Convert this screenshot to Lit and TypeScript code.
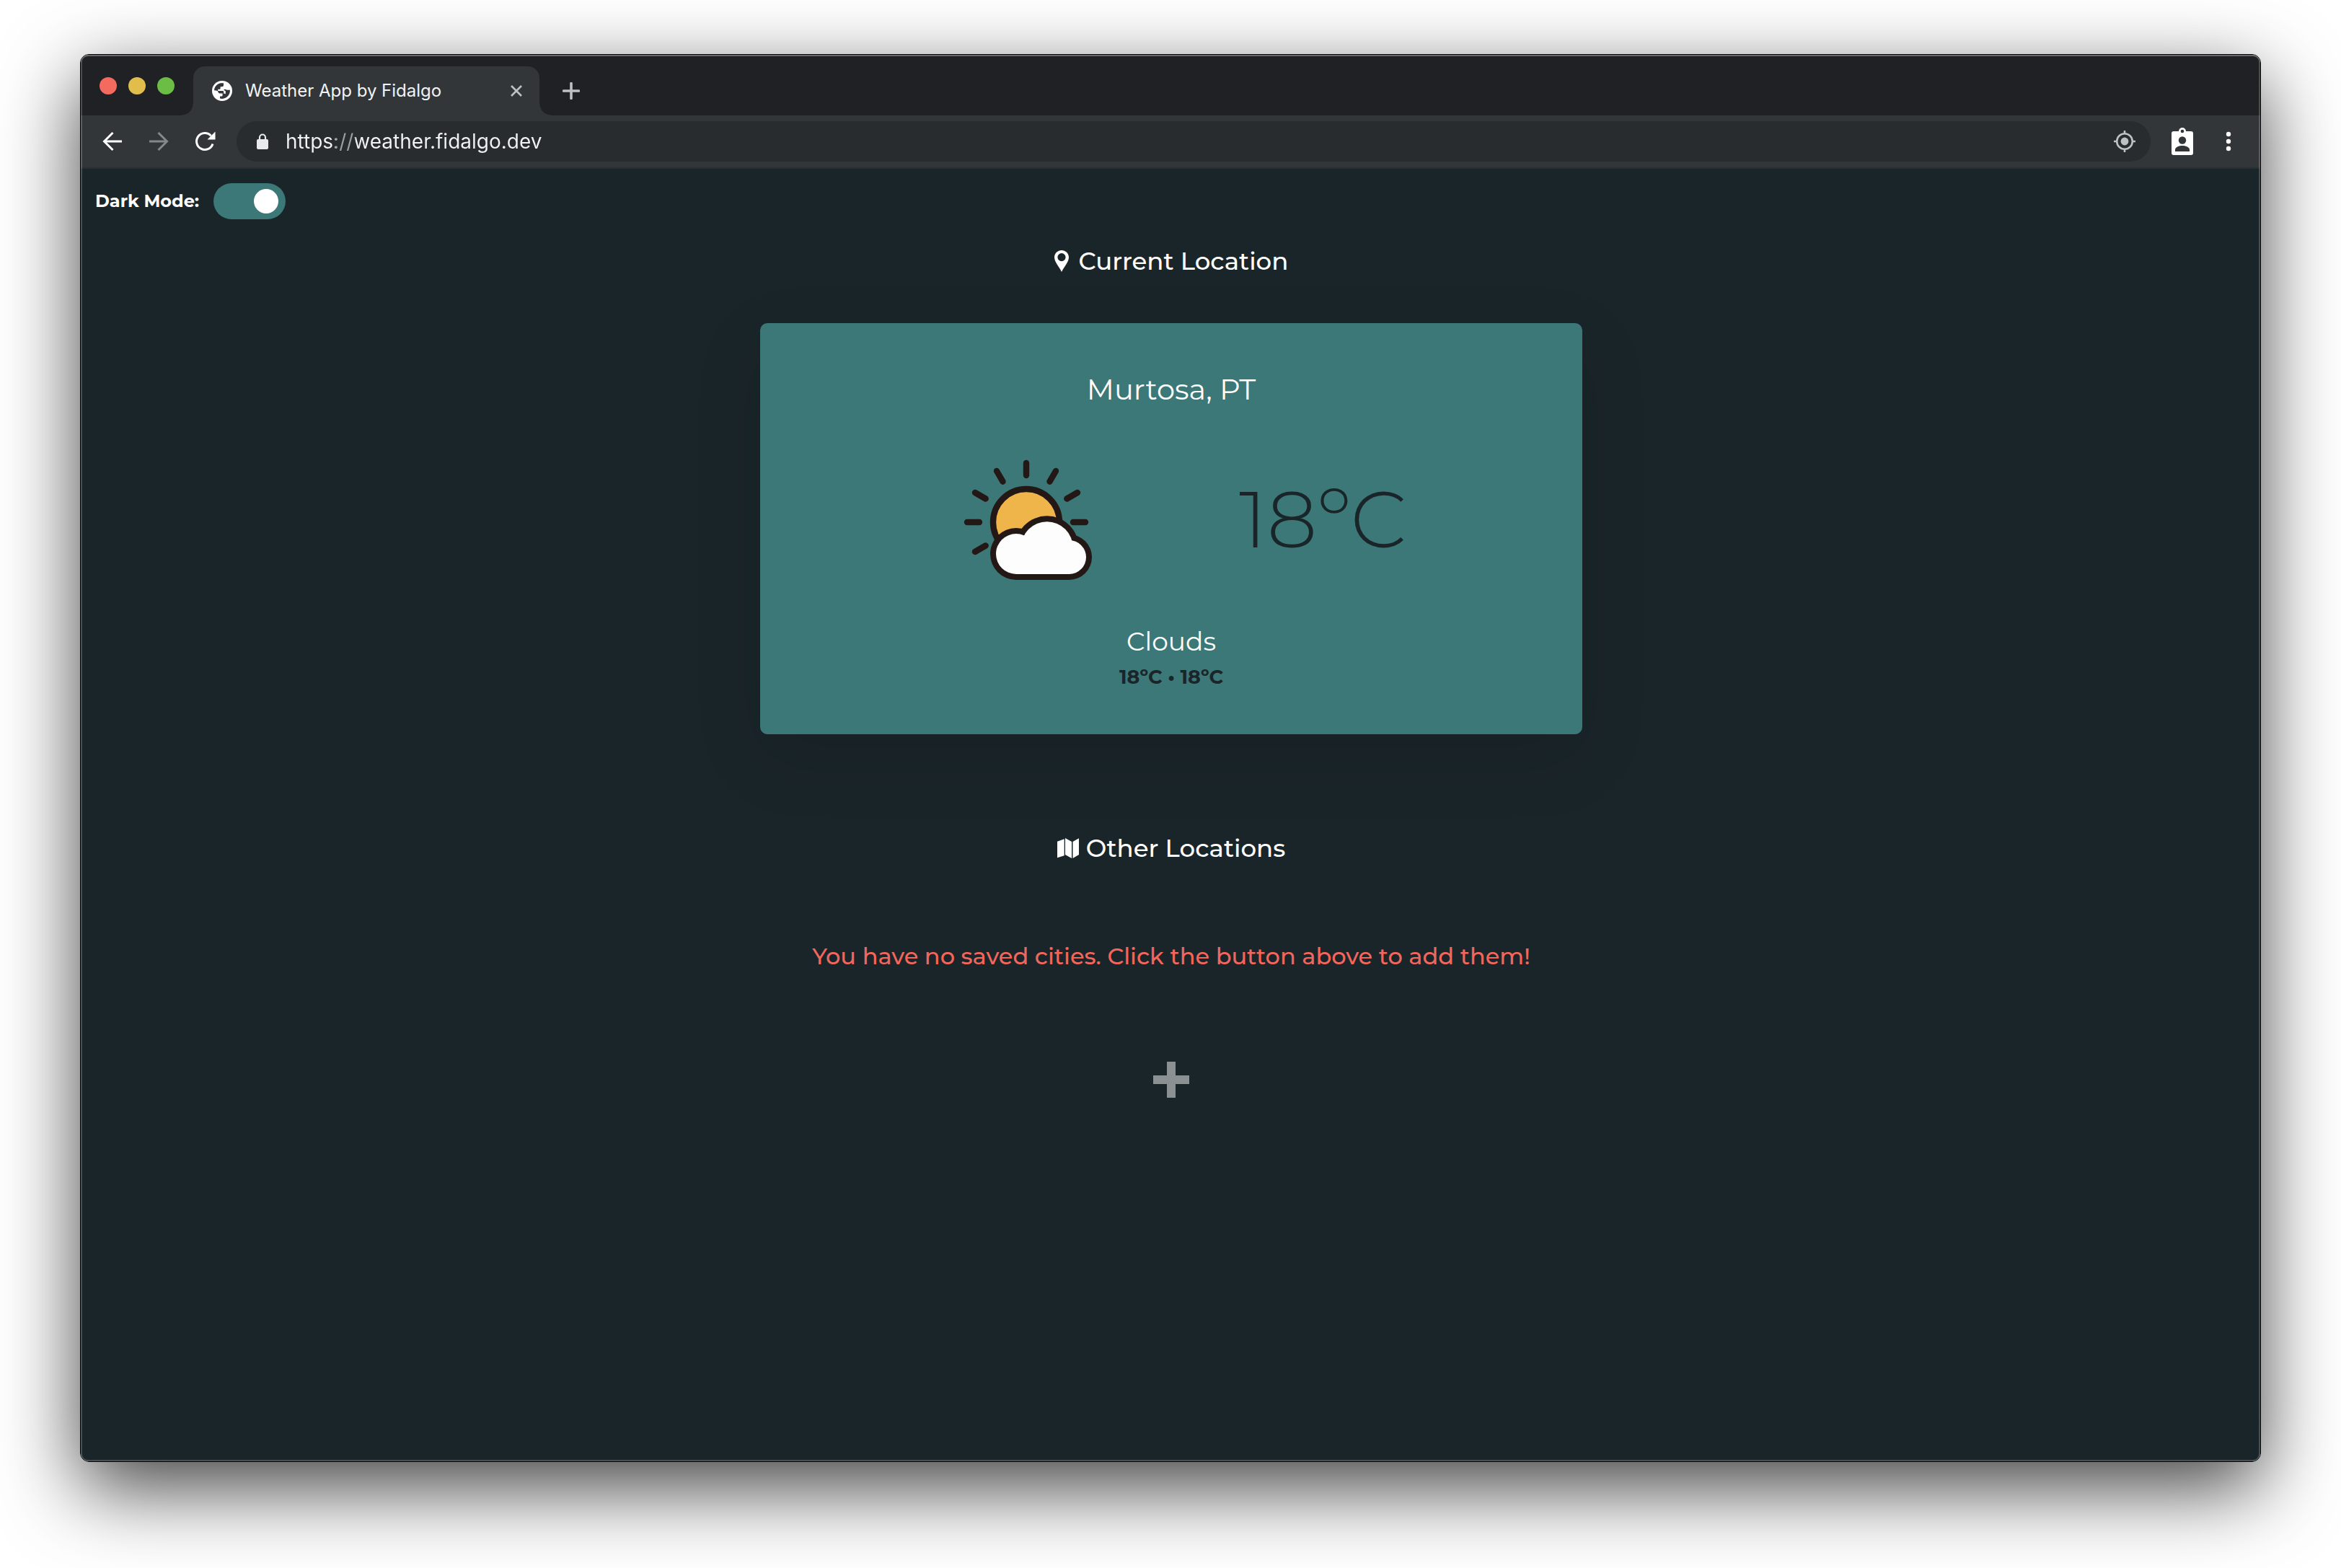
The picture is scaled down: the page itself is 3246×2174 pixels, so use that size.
import { LitElement, html, css, svg } from "lit";
import { customElement, state } from "lit/decorators.js";

const RAY_ANGLES = [0, 30, 60, 90, 120, 150, 180, 330];

const globeIcon = html`<svg class="globe" viewBox="0 0 28 28" aria-hidden="true">
  <circle cx="14" cy="14" r="14" fill="#fff" />
  <path
    fill="#323639"
    d="M3 13.2C3.3 8.3 7 4.200 11.800 3.300H16V6.200C16 7.400 15 8.200 13.800 8.200H11.600V10.400C11.600 11.200 11 11.700 10.200 11.700H8.200V14H14.600C15.600 14 16.200 14.600 16.200 15.500V17.800H17.400C18.600 17.800 18.800 18.500 18.800 19.300V14.500C18.600 13.800 17.600 13.400 16.600 13.200V11.800L19 11.900C20 12 20.600 12.800 21.600 12.800H24.900C25.400 18.800 20.800 24.800 14 24.900C12.800 24.900 11.800 24.700 11 24.500V21.500H13.200C14.200 21.500 14.600 20.800 14.600 20V17.600H11.400C9.600 17.600 8.600 16.600 8.400 15.200C8.200 14 6.800 13.600 5.600 13.400Z"
  />
</svg>`;

const closeIcon = html`<svg class="close-icon" viewBox="0 0 20 20" aria-hidden="true">
  <path d="M3 3L17 17M17 3L3 17" stroke="#bdc1c6" stroke-width="2.6" fill="none" />
</svg>`;

const newTabIcon = html`<svg class="new-icon" viewBox="0 0 24 24" aria-hidden="true">
  <path d="M12 1.500V22.500M1.500 12H22.500" stroke="#bdc1c6" stroke-width="3.600" stroke-linecap="round" />
</svg>`;

const backIcon = html`<svg class="nav-icon" viewBox="0 0 32 32" aria-hidden="true">
  <path d="M29 16H5M16.500 4L4.500 16L16.500 28" stroke="#fff" stroke-width="3" fill="none" />
</svg>`;

const forwardIcon = html`<svg class="nav-icon" viewBox="0 0 32 32" aria-hidden="true">
  <path d="M3 16H27M15.500 4L27.500 16L15.500 28" stroke="#85888a" stroke-width="3" fill="none" />
</svg>`;

const reloadIcon = html`<svg class="nav-icon" viewBox="0 0 32 32" aria-hidden="true">
  <path d="M27 19.500A11.500 11.500 0 1 1 24.500 8.200" stroke="#fff" stroke-width="3" fill="none" />
  <path d="M30.500 2.500V13.500H19.500Z" fill="#fff" />
</svg>`;

const lockIcon = html`<svg class="lock" viewBox="0 0 20 24" aria-hidden="true">
  <rect x="2" y="9" width="16" height="14" rx="2" fill="#e8eaed" />
  <path d="M6 10V6.500a4 4 0 0 1 8 0V10" stroke="#e8eaed" stroke-width="2.200" fill="none" />
</svg>`;

const targetIcon = html`<svg class="target" viewBox="0 0 30 30" aria-hidden="true">
  <circle cx="15" cy="15" r="5.400" fill="#bdc1c6" />
  <circle cx="15" cy="15" r="10.800" fill="none" stroke="#bdc1c6" stroke-width="2.600" />
  <path d="M15 0V4M15 26V30M0 15H4M26 15H30" stroke="#bdc1c6" stroke-width="2.600" />
</svg>`;

const badgeIcon = html`<svg class="badge" viewBox="0 0 30 38" aria-hidden="true">
  <rect y="5" width="30" height="33" rx="3" fill="#fff" />
  <circle cx="15" cy="5" r="5" fill="#fff" />
  <circle cx="15" cy="5" r="2.300" fill="#323639" />
  <circle cx="15" cy="17.500" r="5.200" fill="#323639" />
  <path d="M5 33V30.500C5 26.800 11 25 15 25S25 26.800 25 30.500V33Z" fill="#323639" />
</svg>`;

const menuIcon = html`<svg class="dots" viewBox="0 0 12 32" aria-hidden="true">
  <circle cx="6" cy="6" r="3.200" fill="#fff" />
  <circle cx="6" cy="16" r="3.200" fill="#fff" />
  <circle cx="6" cy="26" r="3.200" fill="#fff" />
</svg>`;

const pinIcon = html`<svg class="pin" viewBox="0 0 24 30" aria-hidden="true">
  <path
    fill="#fff"
    fill-rule="evenodd"
    d="M10 0C4.500 0 0 4.300 0 9.800C0 16 6 22 10 30C14 22 20 16 20 9.800C20 4.300 15.500 0 10 0ZM10 4A5.600 5.600 0 1 1 10 15.200A5.600 5.600 0 1 1 10 4Z"
  />
</svg>`;

const mapIcon = html`<svg class="map" viewBox="0 0 30 28" aria-hidden="true">
  <path
    fill="#fff"
    d="M0 4.700L9.700 1.300V24.300L0 27.300ZM11 0L20 5V28L11 23ZM21.500 5L30 .300V23L21.500 28Z"
  />
</svg>`;

const plusIcon = html`<svg class="plus" viewBox="0 0 50 50" aria-hidden="true">
  <path d="M19 0H31V19H50V31H31V50H19V31H0V19H19Z" fill="#8b9092" />
</svg>`;

const partlyCloudy = html`<svg class="weather-icon" viewBox="0 -4 186 178" role="img" aria-label="Clouds">
  ${RAY_ANGLES.map((angle) => {
    const x = -Math.cos((angle * Math.PI) / 180);
    const y = -Math.sin((angle * Math.PI) / 180);
    return svg`<line
      x1=${90 + x * 65} y1=${89 + y * 65} x2=${90 + x * 82} y2=${89 + y * 82}
      stroke="#231815" stroke-width="8.400" stroke-linecap="round" />`;
  })}
  <circle cx="90" cy="89" r="46" fill="#f0b54a" stroke="#231815" stroke-width="8.400" />
  <g fill="#231815">
    <circle cx="76" cy="133" r="36" />
    <circle cx="118.700" cy="124.300" r="44" />
    <circle cx="149.500" cy="137.500" r="31.500" />
    <rect x="76" y="125" width="73.500" height="44" />
  </g>
  <g fill="#fdfdfd">
    <circle cx="76" cy="133" r="28" />
    <circle cx="118.700" cy="124.300" r="36" />
    <circle cx="149.500" cy="137.500" r="23.500" />
    <rect x="76" y="125" width="73.500" height="36" />
  </g>
</svg>`;

@customElement("browser-chrome")
export class BrowserChrome extends LitElement {
  static styles = css`
    :host {
      display: block;
      font-family: Inter, Roboto, sans-serif;
    }
    button {
      display: flex;
      padding: 0;
      border: 0;
      background: none;
      cursor: pointer;
    }
    svg {
      display: block;
      flex: none;
    }
    .strip {
      display: flex;
      align-items: flex-end;
      height: 84px;
      padding-left: 26px;
      background: #202124;
    }
    .lights {
      display: flex;
      gap: 16px;
      margin: 0 26px 29px 0;
    }
    .light {
      width: 24px;
      height: 24px;
      border-radius: 50%;
    }
    .red {
      background: #f46a5e;
    }
    .yellow {
      background: #e1be4c;
    }
    .green {
      background: #6bbd45;
    }
    .tab {
      position: relative;
      display: flex;
      align-items: center;
      gap: 18px;
      box-sizing: border-box;
      width: 480px;
      height: 68px;
      padding: 0 22px 0 26px;
      border-radius: 16px 16px 0 0;
      background: #323639;
    }
    .tab::before,
    .tab::after {
      content: "";
      position: absolute;
      bottom: 0;
      width: 16px;
      height: 16px;
    }
    .tab::before {
      right: 100%;
      background: radial-gradient(circle at 0 0, transparent 15px, #323639 16px);
    }
    .tab::after {
      left: 100%;
      background: radial-gradient(circle at 100% 0, transparent 15px, #323639 16px);
    }
    .title {
      flex: 1;
      font-size: 24px;
      line-height: 32px;
      color: #f1f3f4;
      white-space: nowrap;
    }
    .new-tab {
      align-self: center;
      margin: 16px 0 0 32px;
    }
    .toolbar {
      display: flex;
      align-items: center;
      height: 72px;
      padding: 0 38px 0 28px;
      border-bottom: 2px solid #2b2f31;
      background: #323639;
    }
    .nav {
      display: flex;
      gap: 32px;
      margin-right: 28px;
    }
    .omnibox {
      display: flex;
      flex: 1;
      align-items: center;
      gap: 22px;
      height: 56px;
      margin-right: 29px;
      padding: 0 21px 0 26px;
      border-radius: 28px;
      background: #282c2f;
    }
    .url {
      flex: 1;
      min-width: 0;
      height: 40px;
      padding: 0;
      border: 0;
      outline: 0;
      font: 28px/40px Inter, Roboto, sans-serif;
      color: #f1f3f4;
      background: linear-gradient(90deg, #f1f3f4 69px, #9aa0a6 69px, #9aa0a6 97px, #f1f3f4 97px);
      -webkit-background-clip: text;
      background-clip: text;
      -webkit-text-fill-color: transparent;
    }
    .globe {
      width: 28px;
      height: 28px;
    }
    .close-icon {
      width: 20px;
      height: 20px;
    }
    .new-icon {
      width: 24px;
      height: 24px;
    }
    .nav-icon {
      width: 32px;
      height: 32px;
    }
    .lock {
      width: 20px;
      height: 24px;
    }
    .target {
      width: 30px;
      height: 30px;
    }
    .badge {
      width: 30px;
      height: 38px;
    }
    .dots {
      width: 12px;
      height: 32px;
    }
    .profile {
      margin-right: 43px;
    }
  `;

  render() {
    return html`
      <div class="strip">
        <div class="lights">
          <button class="light red" aria-label="Close window"></button>
          <button class="light yellow" aria-label="Minimise window"></button>
          <button class="light green" aria-label="Zoom window"></button>
        </div>
        <div class="tab">
          ${globeIcon}
          <span class="title">Weather App by Fidalgo</span>
          <button aria-label="Close tab">${closeIcon}</button>
        </div>
        <button class="new-tab" aria-label="New tab">${newTabIcon}</button>
      </div>
      <div class="toolbar">
        <div class="nav">
          <button aria-label="Back">${backIcon}</button>
          <button aria-label="Forward">${forwardIcon}</button>
          <button aria-label="Reload">${reloadIcon}</button>
        </div>
        <div class="omnibox">
          ${lockIcon}
          <input class="url" type="text" aria-label="Address" .value=${"https://weather.fidalgo.dev"} spellcheck="false" />
          <button aria-label="Location access">${targetIcon}</button>
        </div>
        <button class="profile" aria-label="Profile">${badgeIcon}</button>
        <button aria-label="Menu">${menuIcon}</button>
      </div>
    `;
  }
}

@customElement("weather-card")
export class WeatherCard extends LitElement {
  static styles = css`
    :host {
      display: block;
      box-sizing: border-box;
      width: 100%;
      max-width: 1140px;
      padding: 68px 32px 63px;
      border-radius: 10px;
      background: #3b7877;
      box-shadow: 0 32px 96px rgba(0, 0, 0, 0.12);
      text-align: center;
    }
    .city {
      margin: 0;
      font-size: 40px;
      font-weight: 400;
      line-height: 48px;
      color: #fff;
    }
    .now {
      display: grid;
      grid-template-columns: repeat(2, minmax(0, 408px));
      align-items: center;
      justify-content: center;
      justify-items: center;
      margin: 67px 0 58px;
      padding-left: 12px;
    }
    .weather-icon {
      display: block;
      width: 186px;
      height: 178px;
    }
    .temperature {
      font-size: 110px;
      font-weight: 300;
      line-height: 112px;
      color: #1a252a;
    }
    .condition {
      margin: 0;
      font-size: 36px;
      line-height: 44px;
      color: #fff;
    }
    .range {
      margin: 12px 0 0;
      font-size: 27px;
      font-weight: 700;
      line-height: 32px;
      color: #1a252a;
    }
  `;

  render() {
    return html`
      <h3 class="city">Murtosa, PT</h3>
      <div class="now">
        ${partlyCloudy}
        <span class="temperature">18ºC</span>
      </div>
      <p class="condition">Clouds</p>
      <p class="range">18ºC • 18ºC</p>
    `;
  }
}

@customElement("app-root")
export class AppRoot extends LitElement {
  static styles = css`
    :host {
      display: flex;
      box-sizing: border-box;
      min-height: 100vh;
      padding: 75px 111px 147px;
      background: #fff;
      font-family: Montserrat, Inter, sans-serif;
    }
    .window {
      position: relative;
      display: flex;
      flex: 1;
      flex-direction: column;
      border: 1px solid #000;
      border-radius: 12px;
      box-shadow: 0 36px 110px rgba(0, 0, 0, 0.74);
    }
    .window::after {
      content: "";
      position: absolute;
      inset: 0;
      border-radius: 10px;
      box-shadow:
        inset 0 0 0 2px rgba(255, 255, 255, 0.2),
        inset 0 2px 0 rgba(255, 255, 255, 0.16);
      pointer-events: none;
    }
    .chrome {
      overflow: hidden;
      border-radius: 10px 10px 0 0;
    }
    .page {
      flex: 1;
      padding: 20px 18px 20px 20px;
      border-radius: 0 0 10px 10px;
      background: #1a252a;
    }
    .mode {
      display: flex;
      align-items: center;
      gap: 20px;
      width: max-content;
      font-size: 24px;
      font-weight: 700;
      line-height: 32px;
      color: #fff;
    }
    .switch {
      display: flex;
      align-items: center;
      appearance: none;
      box-sizing: border-box;
      width: 100px;
      height: 50px;
      margin: 0;
      padding: 0 10px;
      border-radius: 25px;
      background: #5c6468;
      cursor: pointer;
    }
    .switch::before {
      content: "";
      width: 34px;
      height: 34px;
      border-radius: 50%;
      background: #fff;
    }
    .switch:checked {
      justify-content: flex-end;
      background: #3b7877;
    }
    .content {
      display: flex;
      flex-direction: column;
      align-items: center;
      margin-top: 38px;
    }
    .heading {
      display: flex;
      align-items: center;
      gap: 10px;
      margin: 0;
      font-size: 34px;
      font-weight: 500;
      line-height: 40px;
      color: #fff;
    }
    .card {
      margin: 66px 0 138px;
    }
    .empty {
      margin: 110px 0 126px;
      font-size: 32px;
      font-weight: 500;
      line-height: 40px;
      color: #f2665c;
    }
    .add {
      display: flex;
      padding: 0;
      border: 0;
      background: none;
      cursor: pointer;
    }
    .pin {
      width: 24px;
      height: 30px;
    }
    .map {
      width: 30px;
      height: 28px;
    }
    .plus {
      width: 50px;
      height: 50px;
    }
  `;

  @state() private dark = true;

  private toggle(e: Event) {
    this.dark = (e.target as HTMLInputElement).checked;
  }

  render() {
    return html`
      <div class="window">
        <browser-chrome class="chrome"></browser-chrome>
        <main class="page">
          <label class="mode">
            Dark Mode:
            <input class="switch" type="checkbox" role="switch" .checked=${this.dark} @change=${this.toggle} />
          </label>
          <div class="content">
            <h2 class="heading">${pinIcon} Current Location</h2>
            <weather-card class="card"></weather-card>
            <h2 class="heading">${mapIcon} Other Locations</h2>
            <p class="empty">You have no saved cities. Click the button above to add them!</p>
            <button class="add" aria-label="Add city">${plusIcon}</button>
          </div>
        </main>
      </div>
    `;
  }
}
